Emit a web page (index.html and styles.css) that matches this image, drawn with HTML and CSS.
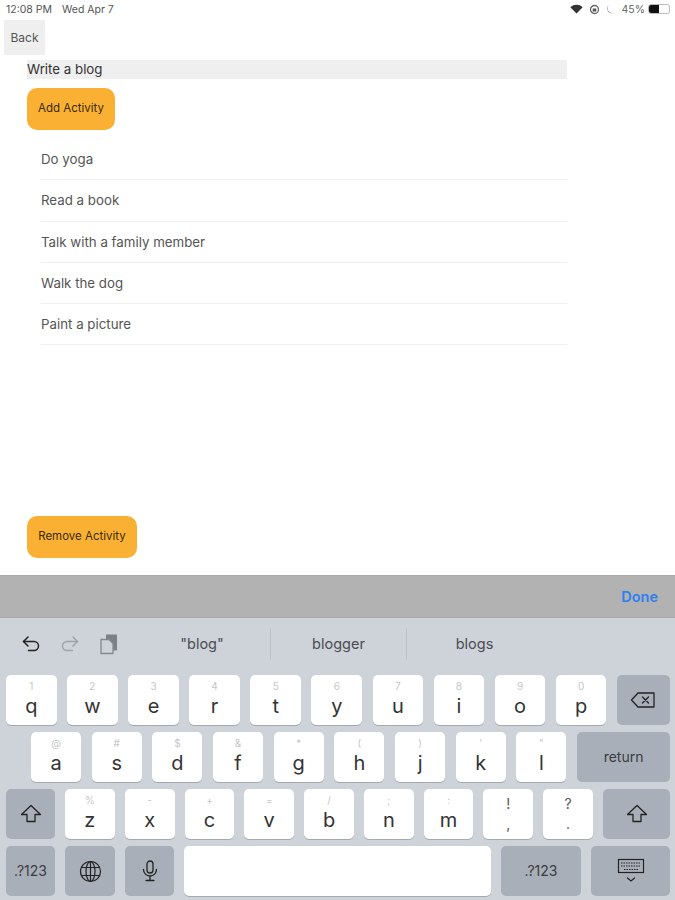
FILE: index.html
```html
<!DOCTYPE html>
<html lang="en">
<head>
    <meta charset="UTF-8">
    <title>Activities</title>
    <link rel="stylesheet" href="styles.css">
</head>
<body>
    <div class="screen">
        <header class="status-bar">
            <span class="status-time">12:08 PM</span>
            <span class="status-date">Wed Apr 7</span>
            <div class="status-right">
                <svg width="13" height="10" viewBox="0 0 13 10"><path d="M6.5 9.6 0.3 3.2a9 9 0 0 1 12.4 0z" fill="#333"/></svg>
                <svg class="status-lock" width="11" height="11" viewBox="0 0 11 11"><circle cx="5.5" cy="5.5" r="4" fill="none" stroke="#666" stroke-width="1.3"/><rect x="3.7" y="4.5" width="3.6" height="3" fill="#555"/></svg>
                <svg class="status-moon" width="10" height="10" viewBox="0 0 10 10"><path d="M3.2 0.5a4.8 4.8 0 0 0 6.300 7.300A5 5 0 0 1 1 5 5 5 0 0 1 3.200 0.500z" fill="#888"/></svg>
                <span class="status-battery">45%</span>
                <div class="battery"><div class="battery-level"></div></div>
            </div>
        </header>

        <main class="page">
            <button class="back-btn">Back</button>
            <div class="content">
                <div class="activity-input">Write a blog</div>
                <button class="action-btn add-btn">Add Activity</button>
                <ul class="activity-list">
                    <li>Do yoga</li>
                    <li>Read a book</li>
                    <li>Talk with a family member</li>
                    <li>Walk the dog</li>
                    <li>Paint a picture</li>
                </ul>
                <button class="action-btn remove-btn">Remove Activity</button>
            </div>
        </main>

        <div class="toolbar"><span class="done">Done</span></div>

        <section class="keyboard">
            <div class="suggestions">
                <div class="edit-tools">
                    <svg width="20" height="20" viewBox="0 0 20 20" fill="none" stroke="#222" stroke-width="1.5" stroke-linecap="round" stroke-linejoin="round"><path d="M7 3 2.5 7.5 7 12"/><path d="M2.5 7.5H13a4.5 4.5 0 0 1 0 9H7.5"/></svg>
                    <svg width="20" height="20" viewBox="0 0 20 20" fill="none" stroke="#a0a4aa" stroke-width="1.5" stroke-linecap="round" stroke-linejoin="round"><path d="M13 3l4.500 4.500L13 12"/><path d="M17.500 7.500H7a4.500 4.500 0 0 0 0 9h5.500"/></svg>
                    <svg width="20" height="22" viewBox="0 0 20 22"><path d="M7 1.500h11v16H7z" fill="#7d8186"/><path d="M2 6.500h8l4 4v10H2z" fill="#ced2d9" stroke="#85898e" stroke-width="1.300" stroke-linejoin="round"/></svg>
                </div>
                <div class="suggestion">"blog"</div>
                <div class="suggestion suggestion-line">blogger</div>
                <div class="suggestion suggestion-line">blogs</div>
            </div>

            <div class="key-row">
                <div class="key"><small>1</small>q</div>
                <div class="key"><small>2</small>w</div>
                <div class="key"><small>3</small>e</div>
                <div class="key"><small>4</small>r</div>
                <div class="key"><small>5</small>t</div>
                <div class="key"><small>6</small>y</div>
                <div class="key"><small>7</small>u</div>
                <div class="key"><small>8</small>i</div>
                <div class="key"><small>9</small>o</div>
                <div class="key"><small>0</small>p</div>
                <div class="key fn-key delete-key">
                    <svg width="26" height="18" viewBox="0 0 26 18" fill="none" stroke="#222" stroke-width="1.300" stroke-linejoin="round"><path d="M8 2h16v14H8L1.500 9z"/><path d="M12.500 6l6 6m0-6-6 6" stroke-linecap="round"/></svg>
                </div>
            </div>

            <div class="key-row row-two">
                <div class="key"><small>@</small>a</div>
                <div class="key"><small>#</small>s</div>
                <div class="key"><small>$</small>d</div>
                <div class="key"><small>&amp;</small>f</div>
                <div class="key"><small>*</small>g</div>
                <div class="key"><small>(</small>h</div>
                <div class="key"><small>)</small>j</div>
                <div class="key"><small>'</small>k</div>
                <div class="key"><small>"</small>l</div>
                <div class="key fn-key return-key">return</div>
            </div>

            <div class="key-row row-three">
                <div class="key fn-key shift-left">
                    <svg width="22" height="20" viewBox="0 0 22 20" fill="none" stroke="#222" stroke-width="1.300" stroke-linejoin="round"><path d="M11 1.500 1.500 10.500H7v7h8v-7h5.500z"/></svg>
                </div>
                <div class="key"><small>%</small>z</div>
                <div class="key"><small>-</small>x</div>
                <div class="key"><small>+</small>c</div>
                <div class="key"><small>=</small>v</div>
                <div class="key"><small>/</small>b</div>
                <div class="key"><small>;</small>n</div>
                <div class="key"><small>:</small>m</div>
                <div class="key"><b class="punct">!</b><b class="punct">,</b></div>
                <div class="key"><b class="punct">?</b><b class="punct">.</b></div>
                <div class="key fn-key shift-right">
                    <svg width="22" height="20" viewBox="0 0 22 20" fill="none" stroke="#222" stroke-width="1.300" stroke-linejoin="round"><path d="M11 1.500 1.500 10.500H7v7h8v-7h5.500z"/></svg>
                </div>
            </div>

            <div class="key-row row-four">
                <div class="key fn-key num-left">.?123</div>
                <div class="key fn-key globe-key">
                    <svg width="23" height="23" viewBox="0 0 23 23" fill="none" stroke="#222" stroke-width="1.200"><circle cx="11.500" cy="11.500" r="10"/><ellipse cx="11.500" cy="11.500" rx="4.500" ry="10"/><path d="M11.500 1.500v20M2.500 7.500h18M2.500 15.500h18"/></svg>
                </div>
                <div class="key fn-key mic-key">
                    <svg width="16" height="22" viewBox="0 0 16 22" fill="none" stroke="#222" stroke-width="1.300" stroke-linecap="round"><rect x="5" y="1" width="6" height="12" rx="3"/><path d="M1.500 9.500a6.500 6.500 0 0 0 13 0M8 16v3.500M4 20.500h8"/></svg>
                </div>
                <div class="key space-key"></div>
                <div class="key fn-key num-right">.?123</div>
                <div class="key fn-key hide-key">
                    <svg width="28" height="26" viewBox="0 0 28 26" fill="none" stroke="#222" stroke-width="1.200"><rect x="1.500" y="1.500" width="25" height="13" fill="none"/><path d="M4 5h20M4 8h20M7 11.500h14" stroke-dasharray="1.500 1"/><path d="M10.500 20l3.500 3 3.500-3" stroke-linecap="round"/></svg>
                </div>
            </div>
        </section>
    </div>
</body>
</html>
```

FILE: styles.css
```css
* {
    box-sizing: border-box;
}

html, body {
    margin: 0;
    padding: 0;
}

body {
    font-family: Inter, "Liberation Sans", sans-serif;
    color: #333;
    background-color: white;
}

.screen {
    width: 675px;
    height: 900px;
    overflow: hidden;
}

/* status bar */
.status-bar {
    height: 20px;
    padding: 0 5px 2px 6px;
    display: flex;
    align-items: center;
    font-size: 10.500px;
    color: #555;
}

.status-date {
    margin-left: 10px;
}

.status-right {
    margin-left: auto;
    display: flex;
    align-items: center;
    gap: 3px;
}

.status-lock, .status-moon {
    margin-left: 3px;
}

.status-battery {
    margin-left: 3px;
    color: #666;
}

.battery {
    width: 22px;
    height: 10px;
    border: 1px solid #bbb;
    border-radius: 3px;
    overflow: hidden;
}

.battery-level {
    width: 10px;
    height: 100%;
    background-color: #111;
}

/* page */
.page {
    height: 555px;
    padding-bottom: 17px;
    display: flex;
    flex-direction: column;
}

.back-btn {
    width: 41px;
    height: 35px;
    margin-left: 4px;
    padding: 0;
    border: none;
    background-color: #efefef;
    color: #555;
    font: inherit;
    font-size: 12px;
}

.content {
    flex: 1;
    padding: 5px 108px 0 27px;
    display: flex;
    flex-direction: column;
    align-items: flex-start;
}

.activity-input {
    width: 100%;
    height: 19px;
    line-height: 19px;
    background-color: #efefef;
    font-size: 13.300px;
}

.action-btn {
    height: 42px;
    padding: 0 0 3px;
    border: none;
    border-radius: 10px;
    background-color: #fab133;
    color: #3a2a08;
    font: inherit;
    font-size: 11.500px;
}

.add-btn {
    width: 88px;
    margin-top: 9px;
}

.remove-btn {
    width: 110px;
    margin-top: auto;
}

.activity-list {
    width: 100%;
    margin: 9px 0 0;
    padding: 0 0 0 14px;
    list-style: none;
    font-size: 13.300px;
}

.activity-list li {
    height: 41.300px;
    padding-top: 11px;
    line-height: 18px;
    border-bottom: 1px solid #f0f0f0;
    color: #555;
}

/* toolbar above keyboard */
.toolbar {
    height: 43px;
    padding-right: 17px;
    display: flex;
    align-items: center;
    justify-content: flex-end;
    background-color: #b2b2b2;
    border-top: 1px solid #aaa;
    border-bottom: 1px solid #aaa;
}

.done {
    color: #2f7ff0;
    font-size: 14.500px;
    font-weight: 600;
}

/* keyboard */
.keyboard {
    height: 282px;
    padding: 0 5px 0 6px;
    background-color: #ced2d9;
}

.suggestions {
    height: 57px;
    padding-bottom: 5px;
    display: flex;
    align-items: center;
    font-size: 14.500px;
    color: #4a4d52;
}

.edit-tools {
    width: 128px;
    padding-left: 15px;
    display: flex;
    align-items: center;
    gap: 19px;
}

.suggestion {
    width: 136px;
    line-height: 32px;
    text-align: center;
}

.suggestion-line {
    border-left: 1px solid #bdc1c8;
}

.key-row {
    height: 50px;
    margin-bottom: 7px;
    display: flex;
    gap: 10.500px;
}

.key {
    flex: 1;
    min-width: 0;
    height: 100%;
    padding-top: 5px;
    display: flex;
    flex-direction: column;
    align-items: center;
    border-radius: 5px;
    background-color: white;
    box-shadow: 0 1px 0 #a6aab0;
    font-size: 20px;
    line-height: 26px;
    color: #333;
}

.key small {
    height: 13px;
    font-size: 10px;
    line-height: 13px;
    color: #c4c6ca;
}

.key .punct {
    height: 20px;
    font-size: 14px;
    font-weight: 400;
    line-height: 20px;
    color: #555;
}

.fn-key {
    padding-top: 0;
    justify-content: center;
    background-color: #a9afb9;
    box-shadow: none;
    color: #3a3c40;
    font-size: 14px;
}

.delete-key {
    flex: 0 0 53px;
}

.row-two {
    padding-left: 25px;
    gap: 10.600px;
}

.return-key {
    flex: 0 0 93px;
}

.row-three {
    gap: 10px;
}

.shift-left {
    flex: 0 0 49px;
}

.shift-right {
    flex: 0 0 67px;
}

.row-four {
    gap: 10px;
}

.num-left, .mic-key {
    flex: 0 0 49px;
}

.globe-key {
    flex: 0 0 50px;
}

.num-right {
    flex: 0 0 80px;
}

.hide-key {
    flex: 0 0 79px;
}
```
